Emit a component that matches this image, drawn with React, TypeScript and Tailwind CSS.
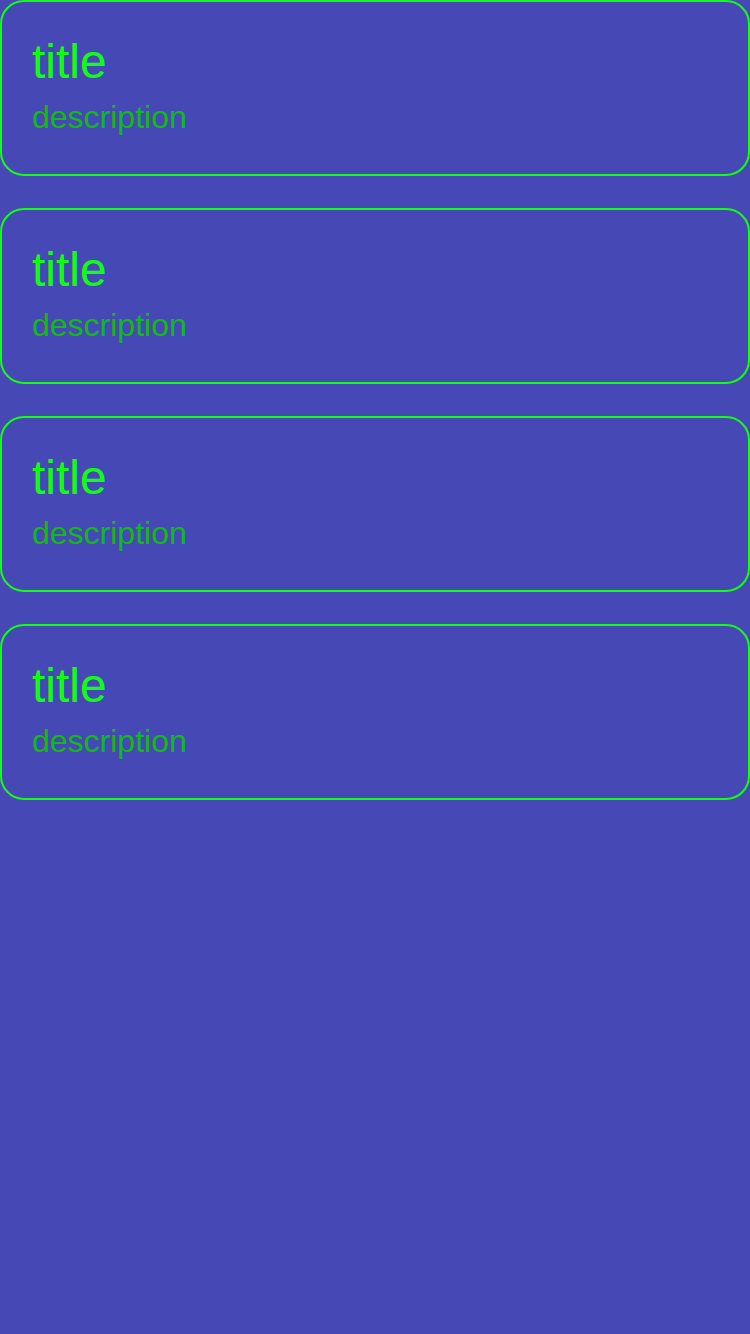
const cards = Array.from({ length: 4 }, () => ({ title: "title", description: "description" }));

export default function App() {
  return (
    <div className="min-h-[1334px] w-[750px] bg-[#4649b5] font-['Liberation_Sans',Arial,sans-serif]">
      <div className="flex flex-col gap-[32px]">
        {cards.map((c, i) => (
          <div
            key={i}
            className="flex h-[176px] flex-col rounded-[24px] border-2 border-[#11ff11] px-[30px] pt-[32px]"
          >
            <div className="text-[48px] leading-[55px] text-[#11ff11]">{c.title}</div>
            <div className="mt-[10px] text-[32px] leading-[37px] text-[#11bb11]">{c.description}</div>
          </div>
        ))}
      </div>
    </div>
  );
}
